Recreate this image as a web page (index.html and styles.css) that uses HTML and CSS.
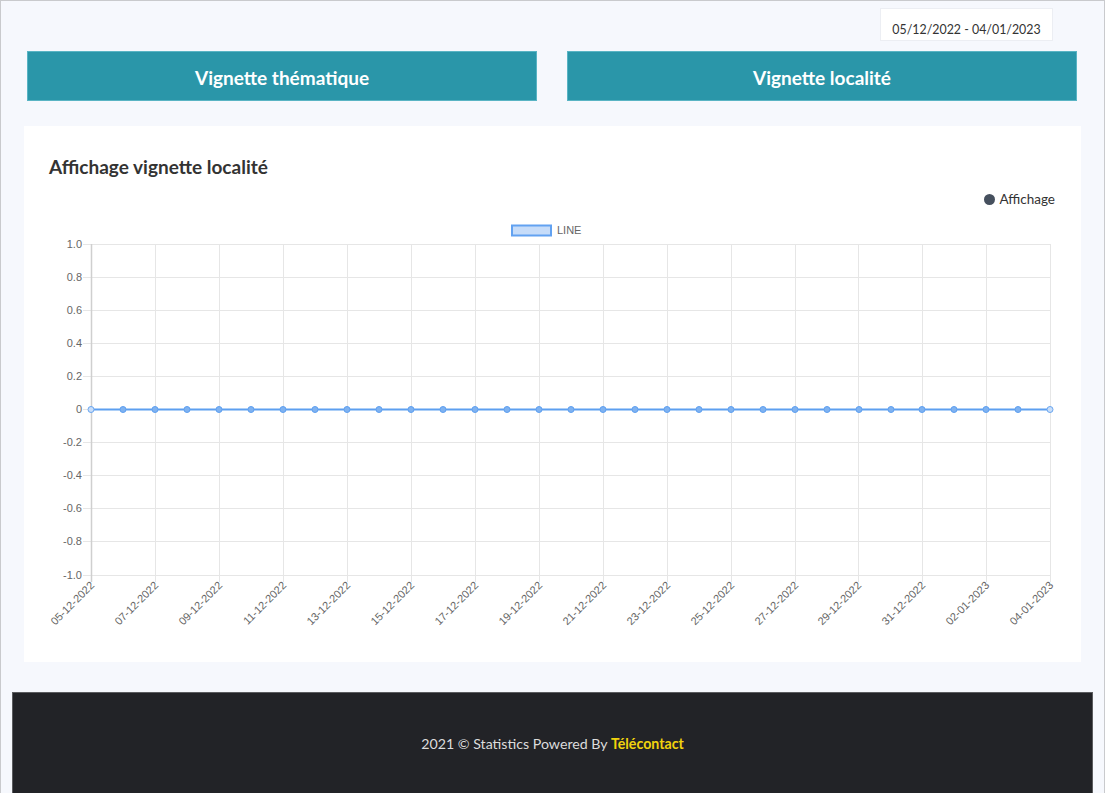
FILE: index.html
```html
<!DOCTYPE html>
<html lang="fr">
<head>
<meta charset="utf-8">
<title>Statistics</title>
<link rel="stylesheet" href="styles.css">
</head>
<body>
<div class="page">
  <div class="date-row">
    <div class="date-box">05/12/2022 - 04/01/2023</div>
  </div>
  <div class="tabs">
    <button class="tab">Vignette thématique</button>
    <button class="tab">Vignette localité</button>
  </div>
  <section class="card">
    <h2 class="card-title">Affichage vignette localité</h2>
    <div class="legend"><span class="legend-dot"></span>Affichage</div>
    <svg class="chart" width="1057" height="430" viewBox="24 215 1057 430" xmlns="http://www.w3.org/2000/svg">
      <defs>
        <marker id="pt" markerWidth="8" markerHeight="8" refX="4" refY="4" markerUnits="userSpaceOnUse">
          <circle cx="4" cy="4" r="3" fill="#7fb2f0" stroke="#5d9ff0" stroke-width="1"/>
        </marker>
        <marker id="pt-end" markerWidth="8" markerHeight="8" refX="4" refY="4" markerUnits="userSpaceOnUse">
          <circle cx="4" cy="4" r="3" fill="#c9def9" stroke="#6aa6f0" stroke-width="1"/>
        </marker>
      </defs>
      <!-- dataset legend -->
      <rect x="512" y="225.5" width="39" height="10" fill="#c6dcf9" stroke="#62a2f1" stroke-width="2"/>
      <text class="axis" x="557" y="234">LINE</text>
      <!-- horizontal grid -->
      <g stroke="#e6e6e6" stroke-width="1">
        <line x1="83" y1="244.5" x2="1050" y2="244.5"/>
        <line x1="83" y1="277.5" x2="1050" y2="277.5"/>
        <line x1="83" y1="310.5" x2="1050" y2="310.5"/>
        <line x1="83" y1="343.5" x2="1050" y2="343.5"/>
        <line x1="83" y1="376.5" x2="1050" y2="376.5"/>
        <line x1="83" y1="409.5" x2="1050" y2="409.5"/>
        <line x1="83" y1="442.5" x2="1050" y2="442.5"/>
        <line x1="83" y1="475.5" x2="1050" y2="475.5"/>
        <line x1="83" y1="508.5" x2="1050" y2="508.5"/>
        <line x1="83" y1="541.5" x2="1050" y2="541.5"/>
        <line x1="83" y1="575.5" x2="1050" y2="575.5"/>
      </g>
      <!-- vertical grid -->
      <g stroke="#e6e6e6" stroke-width="1">
        <line x1="155.5" y1="244" x2="155.5" y2="582"/>
        <line x1="219.5" y1="244" x2="219.5" y2="582"/>
        <line x1="283.5" y1="244" x2="283.5" y2="582"/>
        <line x1="347.5" y1="244" x2="347.5" y2="582"/>
        <line x1="411.5" y1="244" x2="411.5" y2="582"/>
        <line x1="475.5" y1="244" x2="475.5" y2="582"/>
        <line x1="539.5" y1="244" x2="539.5" y2="582"/>
        <line x1="603.5" y1="244" x2="603.5" y2="582"/>
        <line x1="667.5" y1="244" x2="667.5" y2="582"/>
        <line x1="731.5" y1="244" x2="731.5" y2="582"/>
        <line x1="795.5" y1="244" x2="795.5" y2="582"/>
        <line x1="858.5" y1="244" x2="858.5" y2="582"/>
        <line x1="922.5" y1="244" x2="922.5" y2="582"/>
        <line x1="986.5" y1="244" x2="986.5" y2="582"/>
        <line x1="1050.5" y1="244" x2="1050.5" y2="582"/>
      </g>
      <line x1="91.5" y1="244" x2="91.5" y2="582" stroke="#cfcfcf" stroke-width="1.5"/>
      <!-- y labels -->
      <g class="axis" text-anchor="end">
        <text x="82" y="248">1.0</text>
        <text x="82" y="281">0.8</text>
        <text x="82" y="314">0.6</text>
        <text x="82" y="347">0.4</text>
        <text x="82" y="380">0.2</text>
        <text x="82" y="413">0</text>
        <text x="82" y="446">-0.2</text>
        <text x="82" y="479">-0.4</text>
        <text x="82" y="512">-0.6</text>
        <text x="82" y="545">-0.8</text>
        <text x="82" y="579">-1.0</text>
      </g>
      <!-- x labels -->
      <g class="axis" text-anchor="end">
        <text transform="translate(95 586) rotate(-45)">05-12-2022</text>
        <text transform="translate(159 586) rotate(-45)">07-12-2022</text>
        <text transform="translate(223 586) rotate(-45)">09-12-2022</text>
        <text transform="translate(287 586) rotate(-45)">11-12-2022</text>
        <text transform="translate(351 586) rotate(-45)">13-12-2022</text>
        <text transform="translate(415 586) rotate(-45)">15-12-2022</text>
        <text transform="translate(479 586) rotate(-45)">17-12-2022</text>
        <text transform="translate(543 586) rotate(-45)">19-12-2022</text>
        <text transform="translate(607 586) rotate(-45)">21-12-2022</text>
        <text transform="translate(671 586) rotate(-45)">23-12-2022</text>
        <text transform="translate(735 586) rotate(-45)">25-12-2022</text>
        <text transform="translate(799 586) rotate(-45)">27-12-2022</text>
        <text transform="translate(862 586) rotate(-45)">29-12-2022</text>
        <text transform="translate(926 586) rotate(-45)">31-12-2022</text>
        <text transform="translate(990 586) rotate(-45)">02-01-2023</text>
        <text transform="translate(1054 586) rotate(-45)">04-01-2023</text>
      </g>
      <!-- data line -->
      <polyline fill="none" stroke="#5d9ff0" stroke-width="2.2" marker-mid="url(#pt)" marker-start="url(#pt-end)" marker-end="url(#pt-end)"
        points="91,409.5 123,409.5 155,409.5 187,409.5 219,409.5 251,409.5 283,409.5 315,409.5 347,409.5 379,409.5 411,409.5 443,409.5 475,409.5 507,409.5 539,409.5 571,409.5 603,409.5 635,409.5 667,409.5 699,409.5 731,409.5 763,409.5 795,409.5 827,409.5 859,409.5 891,409.5 922,409.5 954,409.5 986,409.5 1018,409.5 1050,409.5"/>
    </svg>
  </section>
  <footer class="footer">
    <p class="footer-text">2021 © Statistics Powered By <span class="brand">Télécontact</span></p>
  </footer>
</div>
</body>
</html>
```

FILE: styles.css
```css
* { box-sizing: border-box; }
html, body { margin: 0; padding: 0; }
body {
  background: #f6f8fd;
  font-family: "Lato", "Open Sans", sans-serif;
  color: #333;
}
.page {
  height: 793px;
  border: 1px solid #c9cacd;
  border-bottom: none;
  overflow: hidden;
  display: flex;
  flex-direction: column;
}
.date-row {
  display: flex;
  justify-content: flex-end;
  padding: 7px 51px 0 0;
}
.date-box {
  width: 173px;
  height: 33px;
  background: #fff;
  border: 1px solid #eceef3;
  font-size: 12.4px;
  font-family: "Lato", sans-serif;
  color: #333;
  display: flex;
  align-items: flex-end;
  justify-content: center;
  padding-bottom: 3px;
}
.tabs {
  display: grid;
  grid-template-columns: 510px 510px;
  column-gap: 30px;
  padding: 10px 0 0 26px;
}
.tab {
  height: 50px;
  border: 1px solid #59b4c4;
  background: #2a96a9;
  color: #fff;
  font-family: "Lato", sans-serif;
  font-weight: 700;
  font-size: 19px;
  cursor: pointer;
  padding: 2px 0 0;
}
.card {
  margin: 25px 23px 0 23px;
  background: #fff;
  height: 536px;
  padding: 30px 0 0 0;
  display: flex;
  flex-direction: column;
}
.card-title {
  margin: 0 0 0 25px;
  font-family: "Lato", sans-serif;
  font-weight: 700;
  font-size: 19px;
  line-height: 22px;
  color: #333;
}
.legend {
  align-self: flex-end;
  margin: 12px 26px 0 0;
  font-family: "Lato", sans-serif;
  font-size: 13.5px;
  line-height: 18px;
  color: #333;
  display: flex;
  align-items: center;
}
.legend-dot {
  width: 11px;
  height: 11px;
  border-radius: 50%;
  background: #46505e;
  margin-right: 4px;
}
.chart {
  display: block;
  margin-top: 7px;
}
.axis {
  font-family: "Liberation Sans", Arial, sans-serif;
  font-size: 11px;
  fill: #666;
}
.footer {
  margin: 30px 11px 0 11px;
  flex: 1;
  background: #222327;
  border: 1px solid #5b5c5f;
  border-bottom: none;
  display: flex;
  align-items: center;
  justify-content: center;
}
.footer-text {
  margin: 0;
  font-family: "Lato", sans-serif;
  font-size: 14.2px;
  color: #dcdcdc;
}
.brand {
  color: #f1d30d;
  font-weight: 700;
}
```
